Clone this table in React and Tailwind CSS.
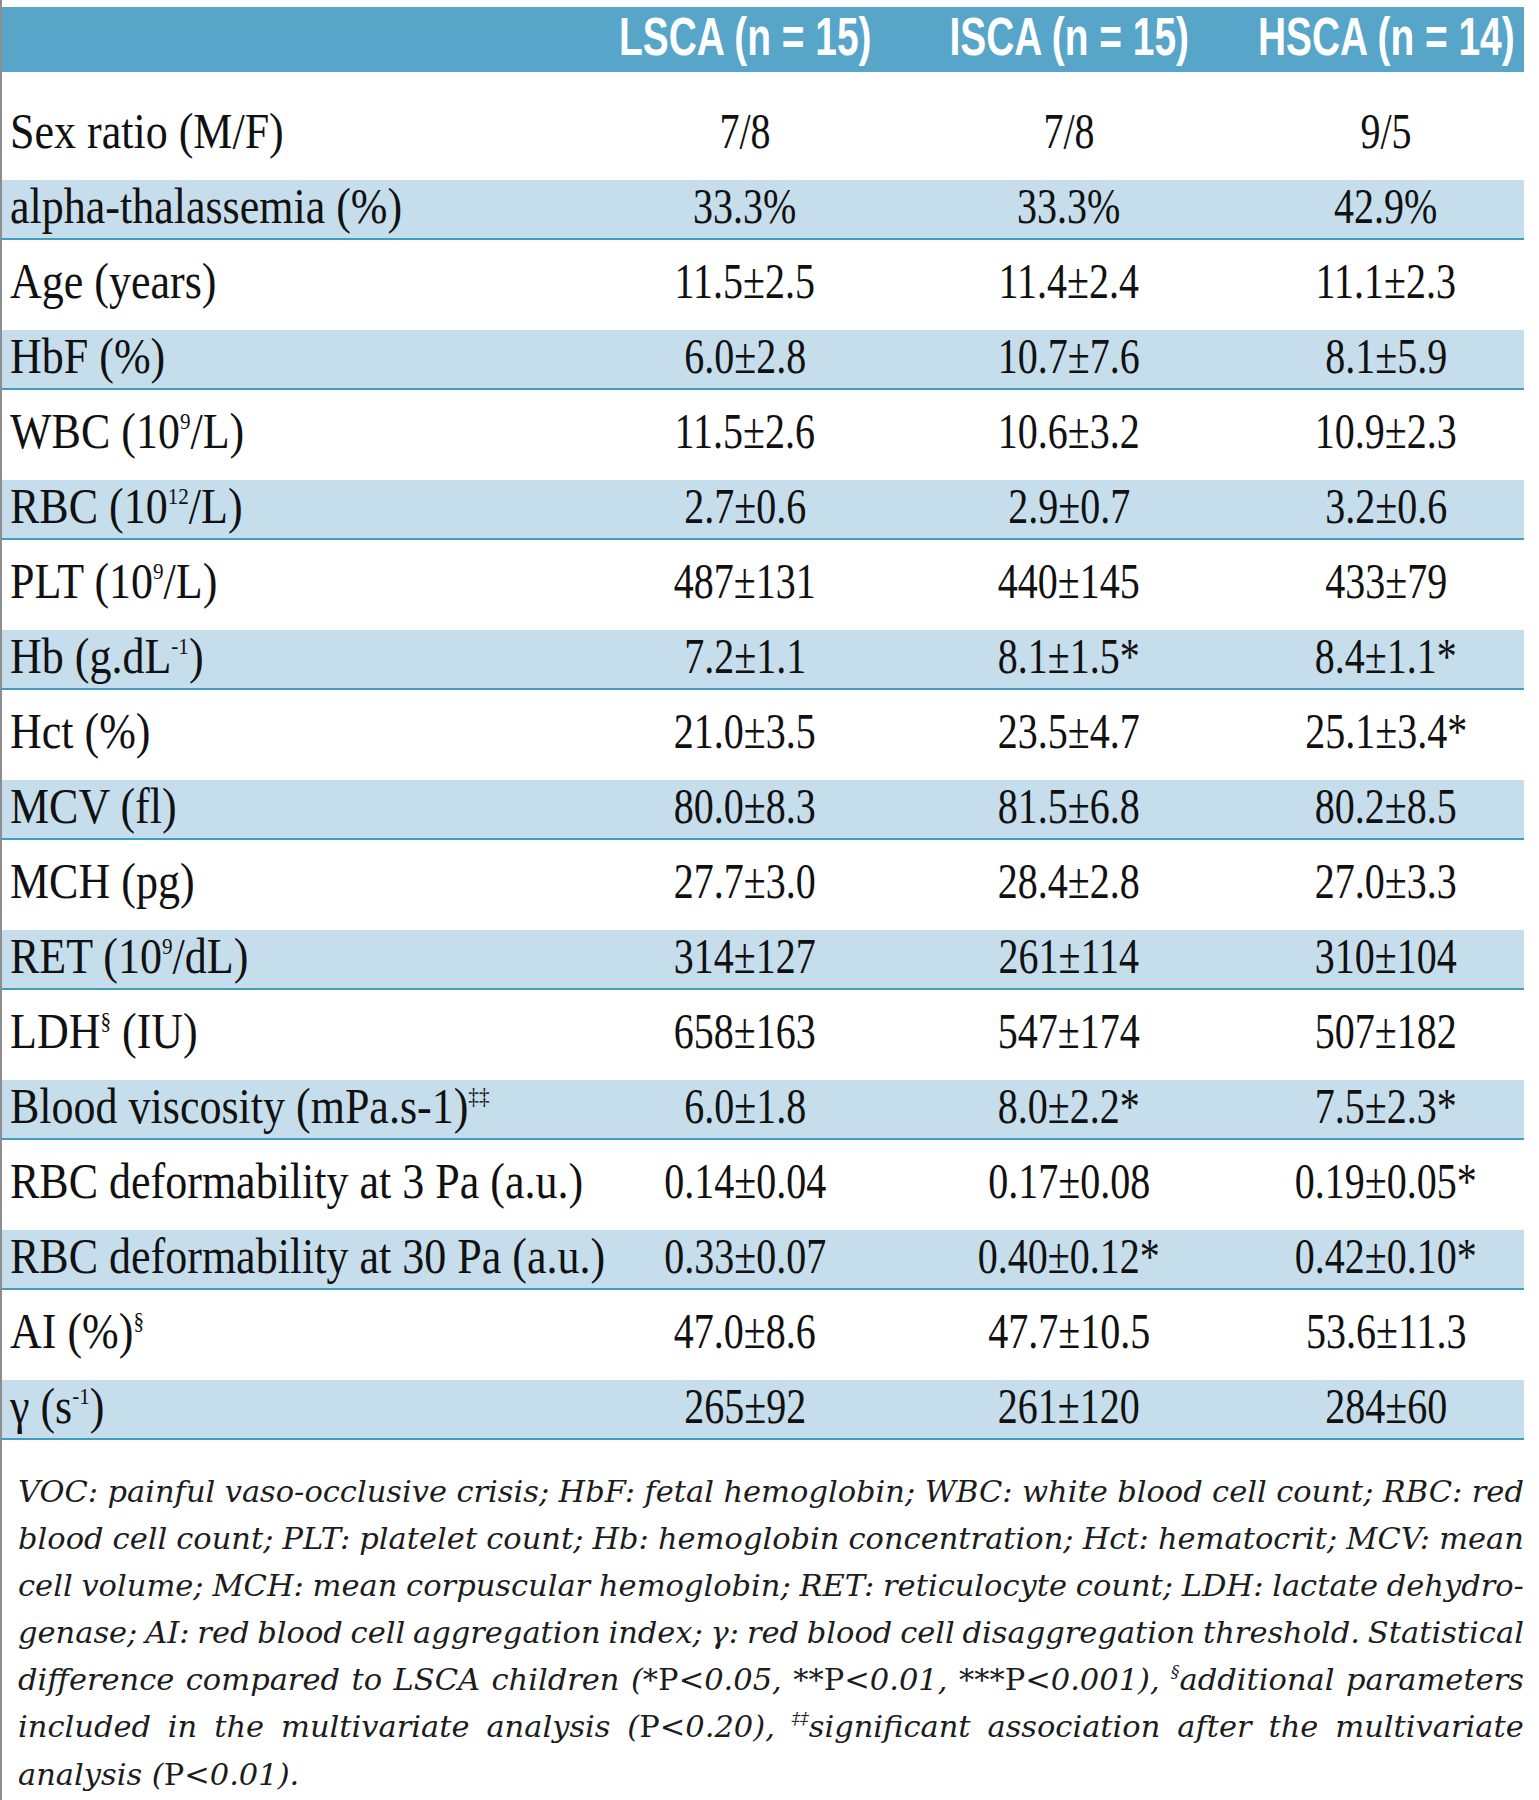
import React from 'react';

const Sup = ({ children }) => (
  <sup className="text-[24px] top-[-0.78em]">{children}</sup>
);

const rows = [
  { label: <>Sex ratio (M/F)</>, v: ['7/8', '7/8', '9/5'] },
  { label: <>alpha-thalassemia (%)</>, v: ['33.3%', '33.3%', '42.9%'] },
  { label: <>Age (years)</>, v: ['11.5±2.5', '11.4±2.4', '11.1±2.3'] },
  { label: <>HbF (%)</>, v: ['6.0±2.8', '10.7±7.6', '8.1±5.9'] },
  { label: <>WBC (10<Sup>9</Sup>/L)</>, v: ['11.5±2.6', '10.6±3.2', '10.9±2.3'] },
  { label: <>RBC (10<Sup>12</Sup>/L)</>, v: ['2.7±0.6', '2.9±0.7', '3.2±0.6'] },
  { label: <>PLT (10<Sup>9</Sup>/L)</>, v: ['487±131', '440±145', '433±79'] },
  { label: <>Hb (g.dL<Sup>-1</Sup>)</>, v: ['7.2±1.1', '8.1±1.5*', '8.4±1.1*'] },
  { label: <>Hct (%)</>, v: ['21.0±3.5', '23.5±4.7', '25.1±3.4*'] },
  { label: <>MCV (fl)</>, v: ['80.0±8.3', '81.5±6.8', '80.2±8.5'] },
  { label: <>MCH (pg)</>, v: ['27.7±3.0', '28.4±2.8', '27.0±3.3'] },
  { label: <>RET (10<Sup>9</Sup>/dL)</>, v: ['314±127', '261±114', '310±104'] },
  { label: <>LDH<Sup>§</Sup> (IU)</>, v: ['658±163', '547±174', '507±182'] },
  { label: <>Blood viscosity (mPa.s-1)<Sup>‡‡</Sup></>, v: ['6.0±1.8', '8.0±2.2*', '7.5±2.3*'] },
  { label: <>RBC deformability at 3 Pa (a.u.)</>, v: ['0.14±0.04', '0.17±0.08', '0.19±0.05*'] },
  { label: <>RBC deformability at 30 Pa (a.u.)</>, v: ['0.33±0.07', '0.40±0.12*', '0.42±0.10*'] },
  { label: <>AI (%)<Sup>§</Sup></>, v: ['47.0±8.6', '47.7±10.5', '53.6±11.3'] },
  { label: <>γ (s<Sup>-1</Sup>)</>, v: ['265±92', '261±120', '284±60'] },
];

const notes = [
  'VOC: painful vaso-occlusive crisis; HbF: fetal hemoglobin; WBC: white blood cell count; RBC: red',
  'blood cell count; PLT: platelet count; Hb: hemoglobin concentration; Hct: hematocrit; MCV: mean',
  'cell volume; MCH: mean corpuscular hemoglobin; RET: reticulocyte count; LDH: lactate dehydro-',
  'genase; AI: red blood cell aggregation index; γ: red blood cell disaggregation threshold. Statistical',
  'difference compared to LSCA children (*P<0.05, **P<0.01, ***P<0.001), §additional parameters',
  'included in the multivariate analysis (P<0.20), ‡‡significant association after the multivariate',
];

function Word({ w }) {
  if (w.startsWith('§')) {
    return (
      <span>
        <sup className="text-[17px] top-[-0.8em]">§</sup>
        {w.slice(1)}
      </span>
    );
  }
  if (w.startsWith('‡‡')) {
    return (
      <span>
        <sup className="text-[17px] top-[-0.8em]">‡‡</sup>
        {w.slice(2)}
      </span>
    );
  }
  const i = w.indexOf('P<');
  if (i >= 0) {
    return (
      <span>
        {w.slice(0, i)}
        <span className="not-italic">P</span>
        {w.slice(i + 1)}
      </span>
    );
  }
  return <span>{w}</span>;
}

export default function App() {
  return (
    <div className="w-[1539px] h-[1800px] bg-white border-l-2 border-[#8e8e8e] text-[#111] overflow-hidden">
      <div className="w-[1522px] pt-[7px]">
        {/* header */}
        <div className="h-[65px] bg-[#57a5c8] grid grid-cols-[598px_290px_358px_276px] font-['Liberation_Sans',Arial,sans-serif] font-bold text-white text-[54px] leading-[59px]">
          <div />
          {['LSCA (n = 15)', 'ISCA (n = 15)', 'HSCA (n = 14)'].map((h) => (
            <div key={h} className="flex justify-center">
              <span className="inline-block whitespace-nowrap scale-x-[0.72]">{h}</span>
            </div>
          ))}
        </div>
        <div className="h-[18px]" />
        {/* rows */}
        <div className="font-['Liberation_Serif','Times_New_Roman',serif] text-[50px] leading-[52px]">
          {rows.map((r, idx) => (
            <div
              key={idx}
              className={
                idx % 2 === 1
                  ? 'mt-[15px] h-[60px] grid grid-cols-[598px_290px_358px_276px] bg-[#c6ddeb] border-b-2 border-[#3f9dc1]'
                  : 'mt-[15px] h-[60px] grid grid-cols-[598px_290px_358px_276px]'
              }
            >
              <div className="pl-[8px]">
                <span className="inline-block whitespace-nowrap origin-left scale-x-[0.88]">{r.label}</span>
              </div>
              {r.v.map((v, j) => (
                <div key={j} className="flex justify-center">
                  <span className="inline-block whitespace-nowrap scale-x-[0.8]">{v}</span>
                </div>
              ))}
            </div>
          ))}
        </div>
        {/* footnote */}
        <div className="mt-[28px] pl-[16px] font-['DejaVu_Serif',serif] italic text-[30.5px] leading-[47.1px] text-[#1c1c1c]">
          {notes.map((line, i) => (
            <div key={i} className="flex justify-between w-[1506px] whitespace-nowrap">
              {line.split(' ').map((w, k) => (
                <Word key={k} w={w} />
              ))}
            </div>
          ))}
          <div className="whitespace-nowrap">
            analysis (<span className="not-italic">P</span>&lt;0.01).
          </div>
        </div>
      </div>
    </div>
  );
}
